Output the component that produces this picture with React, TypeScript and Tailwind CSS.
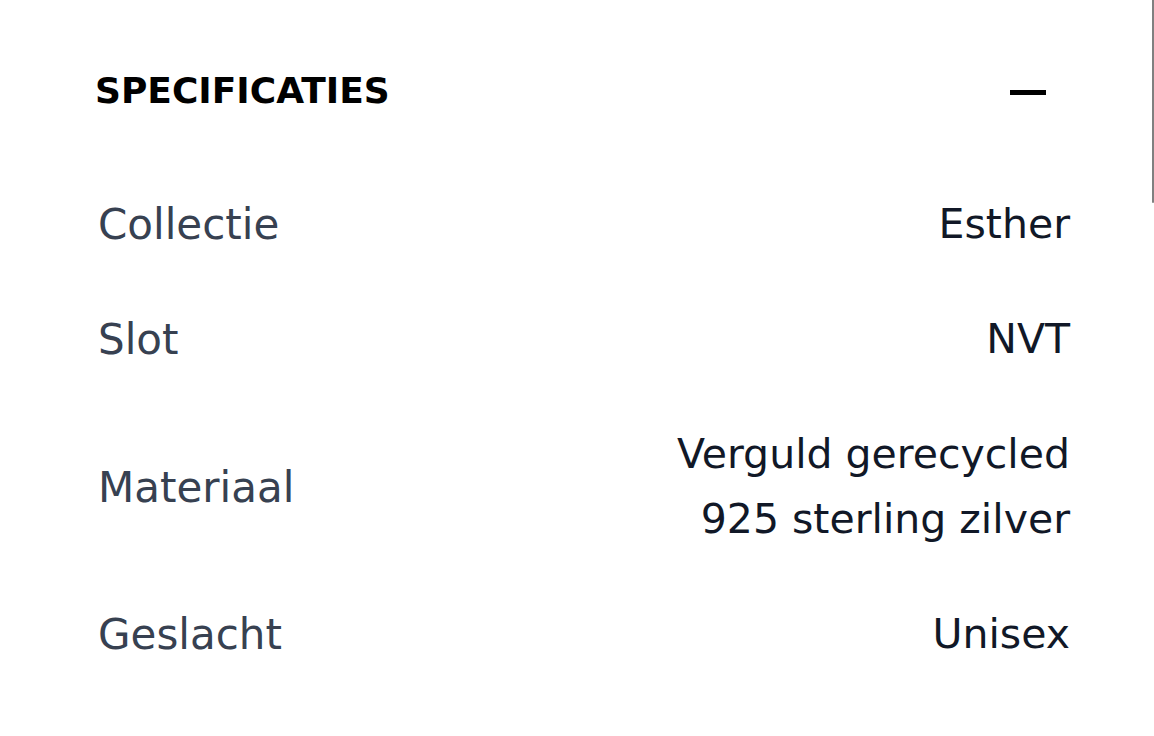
import React from "react";

const rows: { label: string; value: string[] }[] = [
  { label: "Collectie", value: ["Esther"] },
  { label: "Slot", value: ["NVT"] },
  { label: "Materiaal", value: ["Verguld gerecycled", "925 sterling zilver"] },
  { label: "Geslacht", value: ["Unisex"] },
];

export default function App() {
  return (
    <div className="relative w-[1154px] h-[736px] overflow-hidden bg-white" style={{ fontFamily: '"DejaVu Sans", sans-serif' }}>
      <div className="pl-[95px] pr-[84px] pt-[71px]">
        <div className="flex items-center justify-between h-[40px]">
          <h2 className="text-[36px] leading-[40px] font-bold text-black">SPECIFICATIES</h2>
          <div className="w-[36px] h-[5px] bg-black mr-[24px] mt-[2px]" />
        </div>
        <div className="mt-[56px] pl-[3px]">
          {rows.map((r) => (
            <div key={r.label} className="flex items-center justify-between py-[25px]">
              <div className="text-[42px] leading-[65px] text-[#374151]">{r.label}</div>
              <div className="text-right text-[41px] leading-[65px] text-[#111827]">
                {r.value.map((v) => (
                  <div key={v}>{v}</div>
                ))}
              </div>
            </div>
          ))}
        </div>
      </div>
      <div className="absolute right-0 top-0 w-[2px] h-[203px] bg-[#808080] rounded-b-full" />
    </div>
  );
}
